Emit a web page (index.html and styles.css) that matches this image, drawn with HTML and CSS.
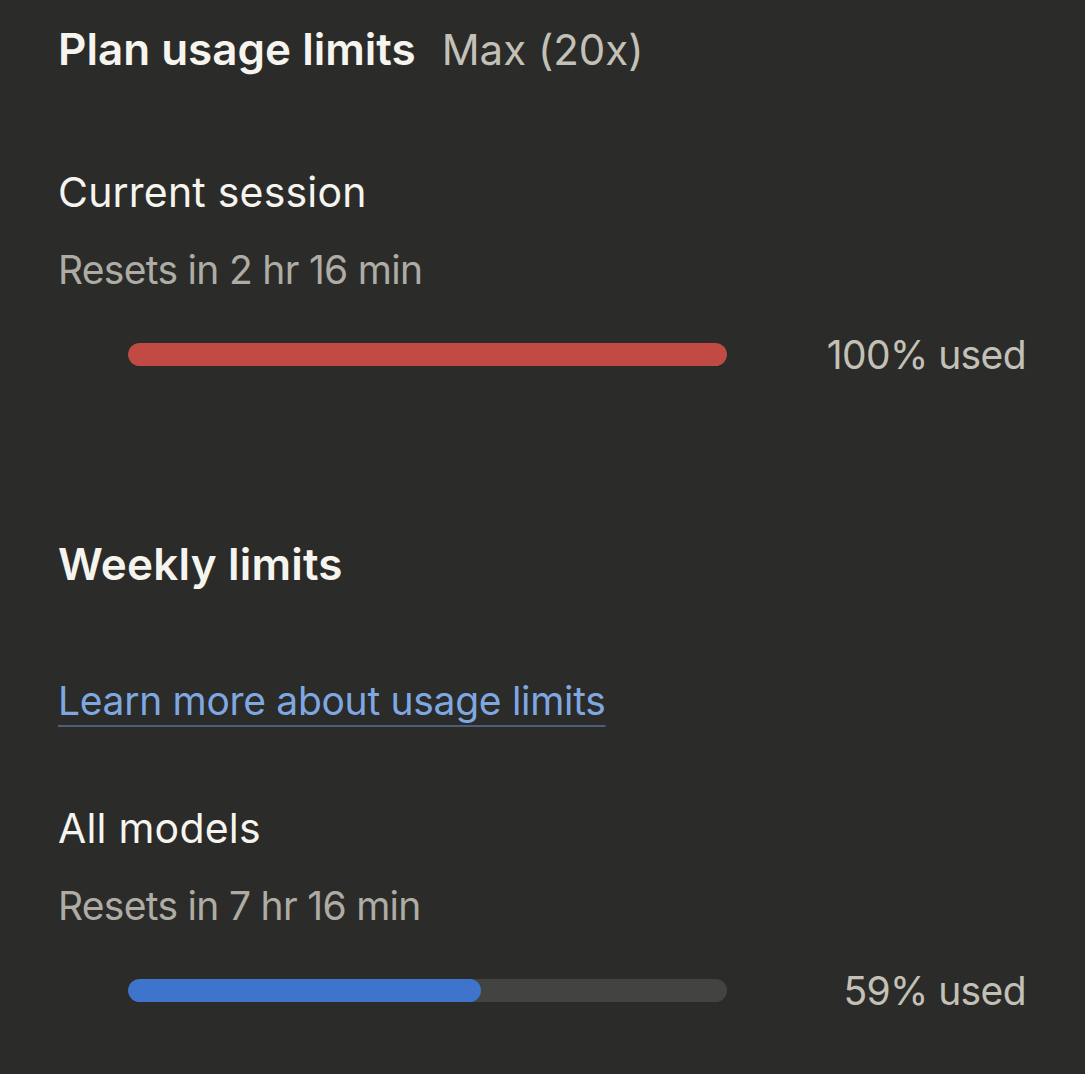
FILE: index.html
```html
<!DOCTYPE html>
<html lang="en">
<head>
    <meta charset="UTF-8">
    <meta name="viewport" content="width=device-width, initial-scale=1.0">
    <title>Plan usage limits</title>
    <link rel="stylesheet" href="styles.css">
</head>
<body>
    <main class="usage">
        <header class="usage-header">
            <h1>Plan usage limits</h1>
            <span class="plan-name">Max (20x)</span>
        </header>

        <section class="limit">
            <h2 class="limit-title">Current session</h2>
            <p class="limit-reset">Resets in 2 hr 16 min</p>
            <div class="limit-row">
                <div class="bar">
                    <div class="bar-fill bar-full" style="width: 100%"></div>
                </div>
                <span class="limit-used">100% used</span>
            </div>
        </section>

        <h2 class="section-title">Weekly limits</h2>

        <a class="learn-link" href="#">Learn more about usage limits</a>

        <section class="limit limit-weekly">
            <h2 class="limit-title">All models</h2>
            <p class="limit-reset">Resets in 7 hr 16 min</p>
            <div class="limit-row">
                <div class="bar">
                    <div class="bar-fill" style="width: 59%"></div>
                </div>
                <span class="limit-used">59% used</span>
            </div>
        </section>
    </main>
</body>
</html>
```

FILE: styles.css
```css
html, body {
    height: 100%;
}

body {
    margin: 0;
    background-color: #2b2b29;
    color: #f5f4ee;
    font-family: Inter, "Noto Sans", sans-serif;
    overflow: hidden;
}

.usage {
    padding: 19px 59px 0 58px;
}

.usage-header {
    display: flex;
    align-items: baseline;
    gap: 26px;
    height: 60px;
}

.usage-header h1 {
    margin: 0;
    font-size: 44px;
    font-weight: 600;
    line-height: 60px;
}

.plan-name {
    font-size: 42px;
    color: #c3c1b7;
    line-height: 60px;
}

.limit {
    margin-top: 85px;
}

.limit-title {
    margin: 0;
    font-size: 41px;
    font-weight: 400;
    line-height: 56px;
    letter-spacing: 0.2px;
}

.limit-reset {
    margin: 22px 0 0;
    font-size: 39px;
    color: #aeaca4;
    line-height: 56px;
    letter-spacing: -0.7px;
}

.limit-row {
    display: flex;
    align-items: center;
    padding-left: 70px;
    margin-top: 28px;
    height: 56px;
}

.bar {
    width: 599px;
    height: 23px;
    border-radius: 12px;
    background-color: #434341;
    overflow: hidden;
}

.bar-fill {
    height: 100%;
    border-radius: 12px;
    background-color: #3e74cc;
}

.bar-full {
    background-color: #c24a44;
}

.limit-used {
    flex: 1;
    text-align: right;
    font-size: 39px;
    color: #c3c1b7;
    letter-spacing: -0.6px;
}

.section-title {
    margin: 152px 0 0;
    font-size: 44px;
    font-weight: 600;
    line-height: 60px;
    letter-spacing: 0.2px;
}

.learn-link {
    display: inline-block;
    margin-top: 79px;
    font-size: 39px;
    line-height: 56px;
    letter-spacing: -0.3px;
    color: #7fa8e2;
    text-decoration: underline;
    text-decoration-color: #4f5e78;
    text-decoration-thickness: 2px;
    text-underline-offset: 10px;
}

.limit-weekly {
    margin-top: 71px;
}
```
